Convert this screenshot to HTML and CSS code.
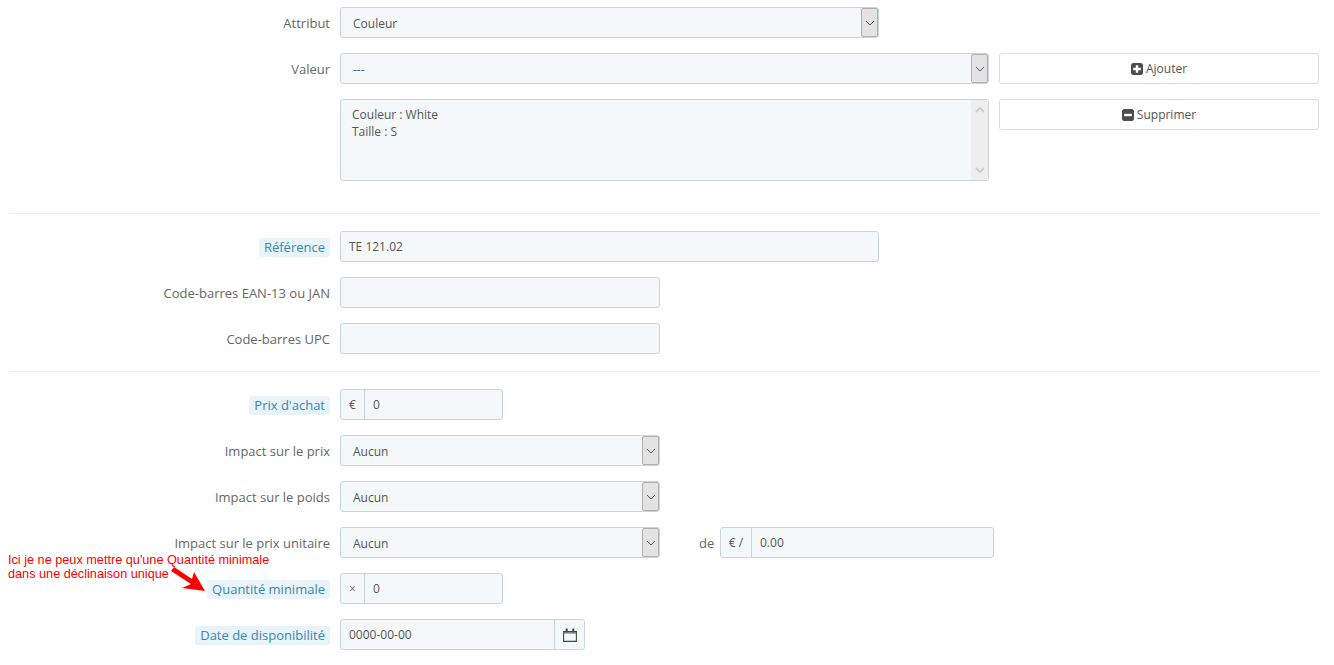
FILE: index.html
```
<!DOCTYPE html>
<html lang="fr">
<head>
<meta charset="utf-8">
<title>Déclinaison</title>
<link rel="stylesheet" href="styles.css">
</head>
<body>
<form class="form">
  <section class="group group-first">
    <div class="row">
      <label class="label">Attribut</label>
      <div class="select w-539"><span class="select-text">Couleur</span><span class="select-arrow"><svg width="10" height="6" viewBox="0 0 10 6"><path d="M1 1l4 4 4-4" fill="none" stroke="#555" stroke-width="1"/></svg></span></div>
    </div>
    <div class="row">
      <label class="label">Valeur</label>
      <div class="select w-649"><span class="select-text">---</span><span class="select-arrow"><svg width="10" height="6" viewBox="0 0 10 6"><path d="M1 1l4 4 4-4" fill="none" stroke="#555" stroke-width="1"/></svg></span></div>
      <button type="button" class="btn"><svg class="btn-icon" width="12" height="12" viewBox="0 0 12 12"><rect width="12" height="12" rx="2.500" fill="#4d4d4d"/><path d="M4.800 2.200h2.400v2.600h2.600v2.400H7.200v2.600H4.800V7.200H2.200V4.800h2.600z" fill="#fff"/></svg>Ajouter</button>
    </div>
    <div class="row">
      <div class="label"></div>
      <div class="listbox">
        <div class="listbox-text">Couleur : White<br>Taille : S</div>
        <div class="scrollbar">
          <svg width="10" height="6" viewBox="0 0 10 6"><path d="M1 5l4-4 4 4" fill="none" stroke="#c4c4c4" stroke-width="1.6"/></svg>
          <svg width="10" height="6" viewBox="0 0 10 6"><path d="M1 1l4 4 4-4" fill="none" stroke="#c4c4c4" stroke-width="1.6"/></svg>
        </div>
      </div>
      <button type="button" class="btn"><svg class="btn-icon" width="12" height="12" viewBox="0 0 12 12"><rect width="12" height="12" rx="2.500" fill="#4d4d4d"/><rect x="2.200" y="4.800" width="7.600" height="2.400" fill="#fff"/></svg>Supprimer</button>
    </div>
  </section>
  <hr class="sep">
  <section class="group">
    <div class="row">
      <label class="label"><span class="hint">Référence</span></label>
      <div class="input w-539">TE 121.02</div>
    </div>
    <div class="row">
      <label class="label">Code-barres EAN-13 ou JAN</label>
      <div class="input w-320"></div>
    </div>
    <div class="row">
      <label class="label">Code-barres UPC</label>
      <div class="input w-320"></div>
    </div>
  </section>
  <hr class="sep sep-second">
  <section class="group">
    <div class="row">
      <label class="label"><span class="hint">Prix d'achat</span></label>
      <div class="input-group w-163"><span class="addon">€</span><span class="addon-value">0</span></div>
    </div>
    <div class="row">
      <label class="label">Impact sur le prix</label>
      <div class="select w-320"><span class="select-text">Aucun</span><span class="select-arrow"><svg width="10" height="6" viewBox="0 0 10 6"><path d="M1 1l4 4 4-4" fill="none" stroke="#555" stroke-width="1"/></svg></span></div>
    </div>
    <div class="row">
      <label class="label">Impact sur le poids</label>
      <div class="select w-320"><span class="select-text">Aucun</span><span class="select-arrow"><svg width="10" height="6" viewBox="0 0 10 6"><path d="M1 1l4 4 4-4" fill="none" stroke="#555" stroke-width="1"/></svg></span></div>
    </div>
    <div class="row">
      <label class="label">Impact sur le prix unitaire</label>
      <div class="select w-320"><span class="select-text">Aucun</span><span class="select-arrow"><svg width="10" height="6" viewBox="0 0 10 6"><path d="M1 1l4 4 4-4" fill="none" stroke="#555" stroke-width="1"/></svg></span></div>
      <span class="de">de</span>
      <div class="input-group w-274"><span class="addon addon-wide">€ /</span><span class="addon-value">0.00</span></div>
    </div>
    <div class="row">
      <label class="label"><span class="hint">Quantité minimale</span></label>
      <div class="input-group w-163"><span class="addon addon-small">×</span><span class="addon-value">0</span></div>
    </div>
    <div class="row">
      <label class="label"><span class="hint">Date de disponibilité</span></label>
      <div class="input-group w-245"><span class="date-value">0000-00-00</span><span class="addon-end"><svg width="14" height="14" viewBox="0 0 14 14"><path d="M.6 3.600h12.800v9.800H.6z" fill="none" stroke="#3f4a3f" stroke-width="1.100"/><path d="M1 4.500h12v.9H1z" fill="#3f4a3f"/><path d="M2.700.4h2v3.800h-2zM9.300.4h2v3.800h-2z" fill="#3f4a3f"/></svg></span></div>
    </div>
  </section>
</form>
<div class="note">Ici je ne peux mettre qu'une Quantité minimale<br>dans une déclinaison unique</div>
<svg class="note-arrow" width="44" height="32" viewBox="0 0 44 32"><path d="M1 4L4 0 22 12 24 5 35 24 12 21 21 17z" fill="#f00"/></svg>
</body>
</html>
```
FILE: styles.css
```
* { box-sizing: border-box; }
html, body { margin: 0; background: #fff; }
body {
  position: relative;
  height: 665px;
  overflow: hidden;
  font-family: "Open Sans", sans-serif;
  font-size: 12px;
  color: #555;
}
.form { padding: 7px 14px 0 10px; }
.group { display: flex; flex-direction: column; gap: 15px; }
.row { display: flex; align-items: stretch; height: 31px; }
.group-first .row:last-child { height: 82px; }
.label {
  width: 320px;
  margin-right: 10px;
  display: flex;
  align-items: center;
  justify-content: flex-end;
  font-size: 13px;
  color: #666;
  white-space: nowrap;
  padding-top: 1px;
}
.hint {
  background: #e8f4f9;
  color: #3a87ad;
  border-radius: 3px;
  padding: 0 5px;
  line-height: 19px;
}
.sep { border: 0; border-top: 1px solid #eceeef; margin: 32px 0 17px; height: 0; }
.sep-second { margin: 17px 0 17px; }
.w-539 { width: 539px; }
.w-649 { width: 649px; }
.w-320 { width: 320px; }
.w-163 { width: 163px; }
.w-274 { width: 274px; }
.w-245 { width: 245px; }
.select, .input, .input-group, .listbox {
  background: #f5f8f9;
  border: 1px solid #c7d6db;
  border-radius: 3px;
  color: #555;
  font-size: 12px;
}
.select { display: flex; align-items: center; justify-content: space-between; }
.select-text { padding-left: 12px; padding-top: 1px; }
.select-arrow {
  width: 17px;
  height: 29px;
  background: #e3e3e3;
  border: 1px solid #b0b0b0;
  border-radius: 2px;
  display: flex;
  align-items: center;
  justify-content: center;
}
.input { display: flex; align-items: center; padding-left: 8px; }
.input-group { display: flex; align-items: center; }
.addon {
  width: 24px;
  height: 100%;
  border-right: 1px solid #c7d6db;
  display: flex;
  align-items: center;
  justify-content: center;
}
.addon-wide { width: 31px; }
.addon-small { font-size: 12px; color: #666; }
.addon-value { padding-left: 8px; }
.date-value { padding-left: 8px; flex: 1; }
.addon-end {
  width: 30px;
  height: 100%;
  border-left: 1px solid #c7d6db;
  display: flex;
  align-items: center;
  justify-content: center;
}
.listbox { width: 649px; display: flex; justify-content: space-between; }
.listbox-text { padding: 6px 11px; line-height: 17px; }
.scrollbar {
  width: 17px;
  background: #eeeeee;
  display: flex;
  flex-direction: column;
  align-items: center;
  justify-content: space-between;
  padding: 7px 0;
}
.btn {
  width: 320px;
  height: 31px;
  margin-left: 10px;
  background: #fff;
  border: 1px solid #dddddd;
  border-radius: 3px;
  color: #555;
  font-family: "Open Sans", sans-serif;
  font-size: 12px;
  display: flex;
  align-items: center;
  justify-content: center;
  gap: 3px;
  padding: 0;
}
.btn-icon { flex: none; }
.de { margin-left: 39px; margin-right: 5px; font-size: 13px; color: #666; align-self: center; width: 16px; }
.note {
  position: absolute;
  left: 8px;
  top: 553px;
  font-family: "Liberation Sans", Arial, sans-serif;
  font-size: 12.700px;
  line-height: 14px;
  color: #f00;
}
.note-arrow { position: absolute; left: 170px; top: 567px; }
```
